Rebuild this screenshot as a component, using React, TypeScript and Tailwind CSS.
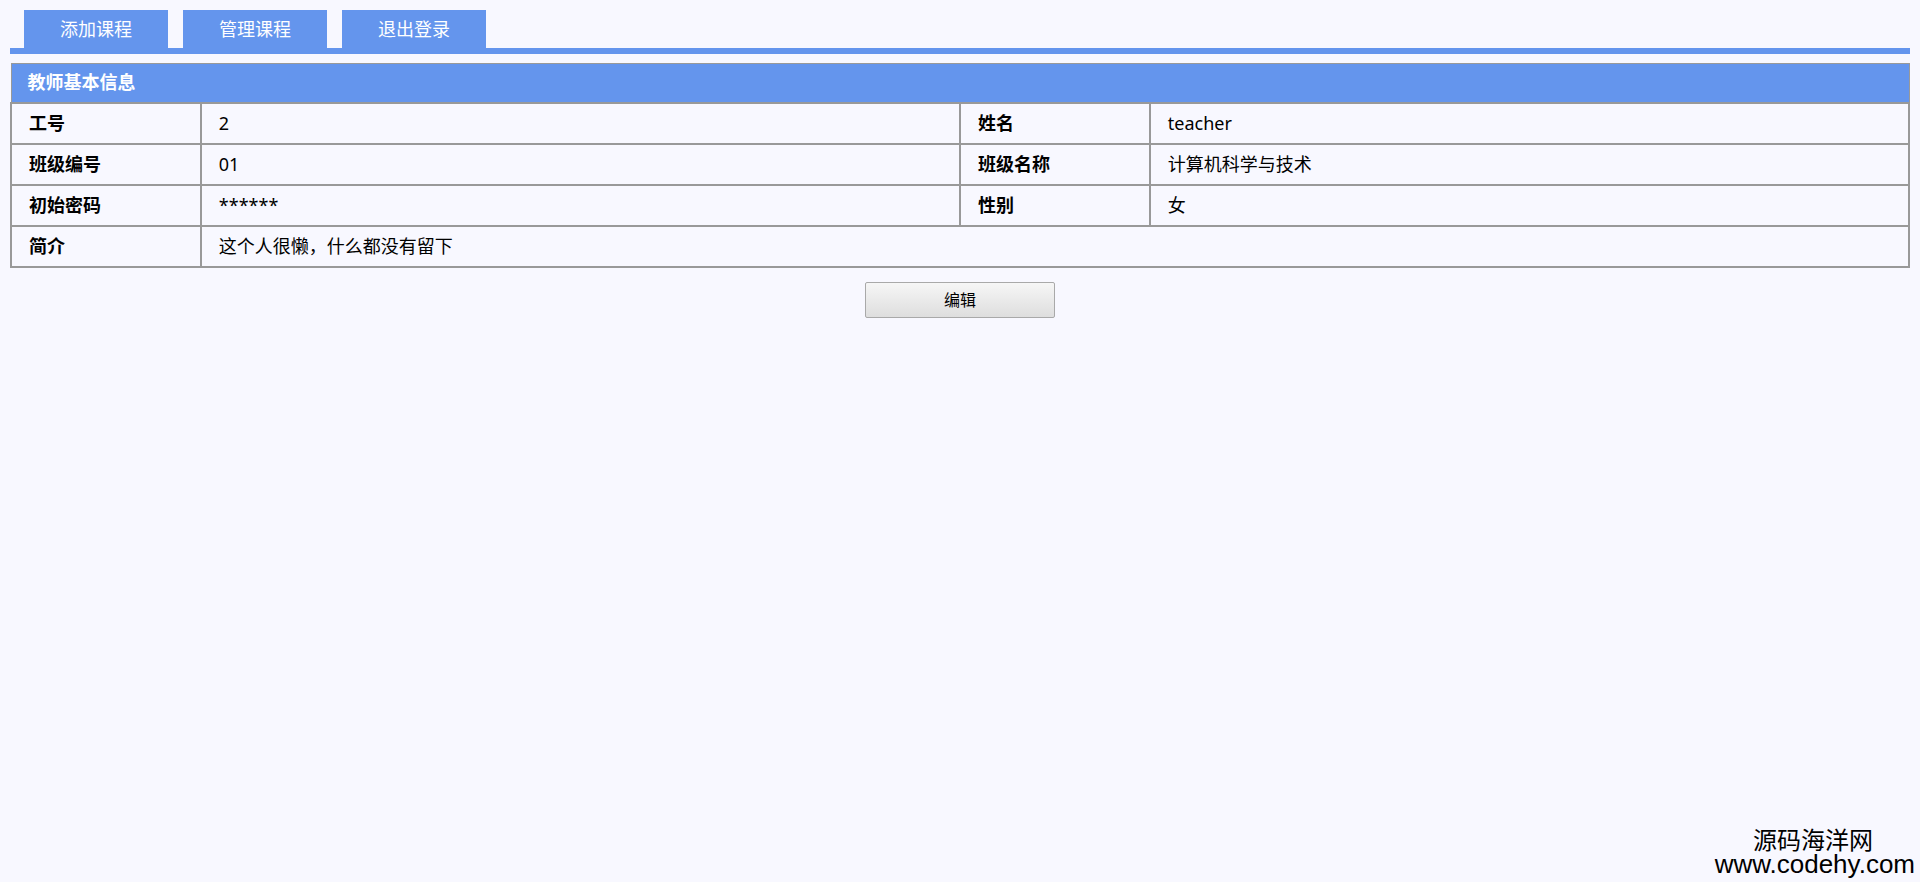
import React from "react";

const font = { fontFamily: '"Noto Sans", "Noto Sans CJK SC", sans-serif' };

export default function App() {
  const rows: [string, string, string?, string?][] = [
    ["工号", "2", "姓名", "teacher"],
    ["班级编号", "01", "班级名称", "计算机科学与技术"],
    ["初始密码", "******", "性别", "女"],
    ["简介", "这个人很懒，什么都没有留下"],
  ];
  return (
    <div
      className="relative min-h-[882px] w-full bg-[#f8f8ff] px-[10px] pt-[10px] text-[#000]"
      style={font}
    >
      <div className="flex gap-[15px] pl-[14px]">
        {["添加课程", "管理课程", "退出登录"].map((t) => (
          <div
            key={t}
            className="flex h-[38px] w-[144px] items-center justify-center bg-[#6495ed] text-[18px] text-white"
          >
            {t}
          </div>
        ))}
      </div>
      <div className="h-[6px] w-full bg-[#6495ed]" />
      <table className="mt-[9px] w-full table-fixed border-collapse text-[18px]">
        <colgroup>
          <col className="w-[10%]" />
          <col className="w-[40%]" />
          <col className="w-[10%]" />
          <col className="w-[40%]" />
        </colgroup>
        <thead>
          <tr>
            <th
              colSpan={4}
              className="h-[39px] border border-[#999] bg-[#6495ed] px-[16px] text-left font-bold text-white"
            >
              教师基本信息
            </th>
          </tr>
        </thead>
        <tbody>
          {rows.map((r) => (
            <tr key={r[0]}>
              <td className="h-[41px] border-2 border-[#999] px-[17px] font-bold">{r[0]}</td>
              {r[2] ? (
                <>
                  <td className="h-[41px] border-2 border-[#999] px-[17px]">{r[1]}</td>
                  <td className="h-[41px] border-2 border-[#999] px-[17px] font-bold">{r[2]}</td>
                  <td className="h-[41px] border-2 border-[#999] px-[17px]">{r[3]}</td>
                </>
              ) : (
                <td colSpan={3} className="h-[41px] border-2 border-[#999] px-[17px]">
                  {r[1]}
                </td>
              )}
            </tr>
          ))}
        </tbody>
      </table>
      <div className="mt-[14px] flex justify-center">
        <button className="h-[36px] w-[190px] rounded-[2px] border border-[#a9a9a9] bg-gradient-to-b from-[#f6f6f6] to-[#dedede] text-[16px] text-black">
          编辑
        </button>
      </div>
      <div
        className="absolute bottom-[5px] right-[5px] flex flex-col items-end text-black"
        style={{ fontFamily: '"Liberation Sans", "Noto Sans CJK SC", sans-serif' }}
      >
        <span className="pr-[42px] text-[24px] leading-[24px]" style={{ fontFamily: '"Noto Sans CJK SC", sans-serif' }}>
          源码海洋网
        </span>
        <span className="text-[26px] leading-[26px]">www.codehy.com</span>
      </div>
    </div>
  );
}
